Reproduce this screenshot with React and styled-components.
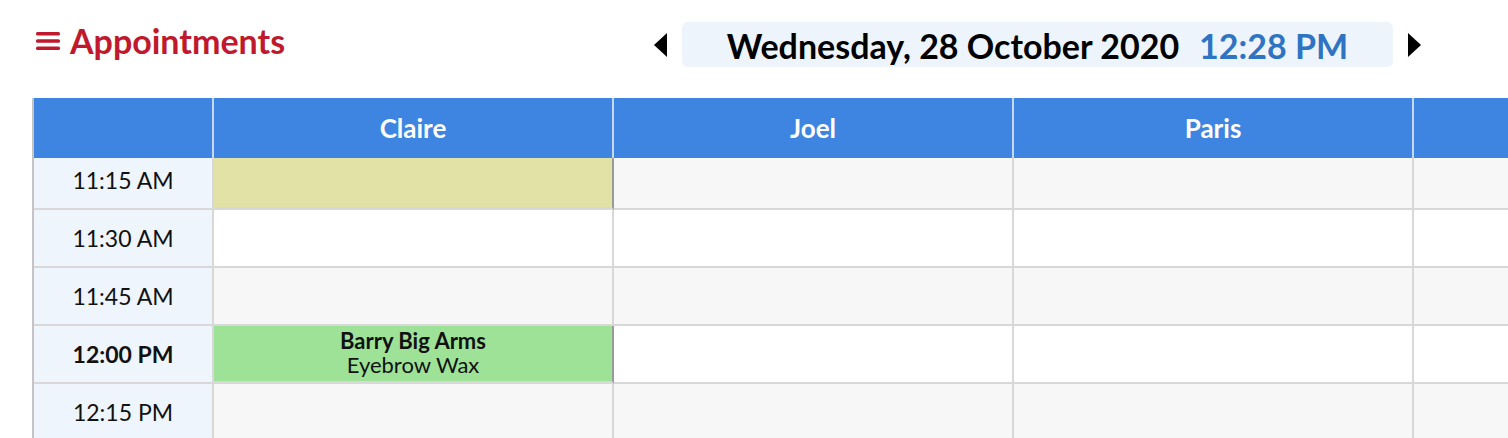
import React from 'react';
import styled, { createGlobalStyle } from 'styled-components';

const GlobalStyle = createGlobalStyle`
  html, body {
    margin: 0;
    padding: 0;
    background: #fff;
    overflow: hidden;
    font-family: Lato, "Open Sans", sans-serif;
  }
`;

const Page = styled.div`
  width: 1508px;
  height: 438px;
  overflow: hidden;
`;

const TopBar = styled.div`
  display: flex;
  align-items: center;
  height: 98px;
  box-sizing: border-box;
  padding: 0 0 9px 36px;
`;

const Title = styled.div`
  width: 617px;
  display: flex;
  align-items: center;
  gap: 10px;
  color: #c0182c;
  font-size: 34px;
  font-weight: 700;
  margin-top: -8px;
`;

const DateNav = styled.div`
  display: flex;
  align-items: center;
`;

const Arrow = styled.button`
  border: none;
  background: none;
  padding: 0;
  width: 15px;
  height: 24px;
  display: flex;
  cursor: pointer;
`;

const DateBox = styled.div`
  display: flex;
  align-items: baseline;
  gap: 20px;
  width: 711px;
  height: 45px;
  box-sizing: border-box;
  margin: 0 14px;
  justify-content: center;
  background: #edf4fc;
  border-radius: 6px;
  font-size: 34px;
  font-weight: 700;
  line-height: 47px;
  color: #000;
`;

const Time = styled.span`
  color: #2f74c2;
`;

const Table = styled.div`
  border-left: 2px solid #c4c4c4;
  margin-left: 32px;
`;

const Row = styled.div`
  display: flex;
  width: 1700px;
`;

const HeadCell = styled.div`
  flex: 0 0 ${p => p.$w}px;
  box-sizing: border-box;
  height: 60px;
  background: #3d85e0;
  border-right: 2px solid #c9d6e6;
  color: #fff;
  font-size: 26px;
  font-weight: 700;
  display: flex;
  align-items: center;
  justify-content: center;
`;

const TimeCell = styled.div`
  flex: 0 0 180px;
  box-sizing: border-box;
  height: ${p => p.$h}px;
  padding-bottom: ${p => 58 - p.$h}px;
  background: #eef5fc;
  border-right: 2px solid #d8d8d8;
  border-bottom: 2px solid #d8d8d8;
  font-size: 23px;
  font-weight: ${p => (p.$now ? 700 : 400)};
  color: #111;
  display: flex;
  align-items: center;
  justify-content: center;
`;

const Slot = styled.div`
  flex: 0 0 400px;
  box-sizing: border-box;
  height: ${p => p.$h}px;
  background: ${p => p.$bg};
  border-right: 2px solid #d8d8d8;
  border-bottom: 2px solid #d8d8d8;
`;

const Booking = styled(Slot)`
  border-right-color: #9a9a9a;
  border-bottom-width: 3px;
  display: flex;
  flex-direction: column;
  align-items: center;
  justify-content: center;
  color: #111;
  font-size: 22px;
  line-height: 24px;
  padding-bottom: 2px;
`;

const Client = styled.div`
  font-weight: 700;
`;

const MenuIcon = () => (
  <svg width="24" height="20" viewBox="0 0 24 20">
    <rect x="0" y="1" width="24" height="3.4" rx="1.5" fill="#c0182c" />
    <rect x="0" y="8.3" width="24" height="3.4" rx="1.5" fill="#c0182c" />
    <rect x="0" y="15.6" width="24" height="3.4" rx="1.5" fill="#c0182c" />
  </svg>
);

const Triangle = ({ dir }) => (
  <svg width="15" height="24" viewBox="0 0 15 24">
    {dir === 'left'
      ? <polygon points="14,0 14,24 1,12" fill="#000" />
      : <polygon points="1,0 1,24 14,12" fill="#000" />}
  </svg>
);

const staff = ['Claire', 'Joel', 'Paris', ''];

const slots = [
  { time: '11:15 AM', h: 52, bg: '#f7f7f7', claire: { color: '#e3e2a6' } },
  { time: '11:30 AM', h: 58, bg: '#ffffff' },
  { time: '11:45 AM', h: 58, bg: '#f7f7f7' },
  { time: '12:00 PM', h: 58, bg: '#ffffff', now: true, claire: { color: '#9de297', client: 'Barry Big Arms', service: 'Eyebrow Wax' } },
  { time: '12:15 PM', h: 58, bg: '#f7f7f7' },
];

export default function App() {
  return (
    <Page>
      <GlobalStyle />
      <TopBar>
        <Title>
          <MenuIcon />
          Appointments
        </Title>
        <DateNav>
          <Arrow aria-label="Previous day"><Triangle dir="left" /></Arrow>
          <DateBox>
            <span>Wednesday, 28 October 2020</span>
            <Time>12:28 PM</Time>
          </DateBox>
          <Arrow aria-label="Next day"><Triangle dir="right" /></Arrow>
        </DateNav>
      </TopBar>
      <Table>
        <Row>
          <HeadCell $w={180} />
          {staff.map((name, i) => (
            <HeadCell key={i} $w={400}>{name}</HeadCell>
          ))}
        </Row>
        {slots.map(slot => (
          <Row key={slot.time}>
            <TimeCell $h={slot.h} $now={slot.now}>{slot.time}</TimeCell>
            {slot.claire ? (
              <Booking $h={slot.h} $bg={slot.claire.color}>
                {slot.claire.client && <Client>{slot.claire.client}</Client>}
                {slot.claire.service && <div>{slot.claire.service}</div>}
              </Booking>
            ) : (
              <Slot $h={slot.h} $bg={slot.bg} />
            )}
            <Slot $h={slot.h} $bg={slot.bg} />
            <Slot $h={slot.h} $bg={slot.bg} />
            <Slot $h={slot.h} $bg={slot.bg} />
          </Row>
        ))}
      </Table>
    </Page>
  );
}
